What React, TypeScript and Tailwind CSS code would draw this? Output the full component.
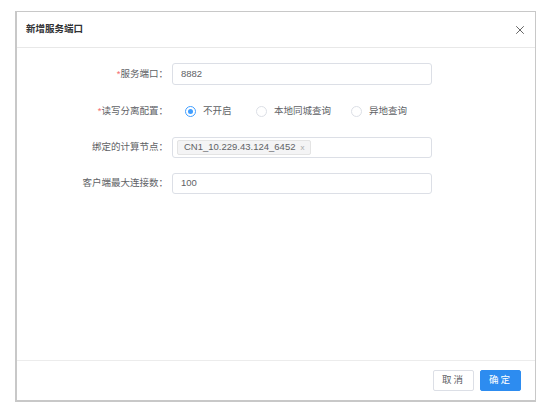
import { X } from 'lucide-react';

const font = { fontFamily: '"Liberation Sans", "Noto Sans CJK SC", sans-serif' };

function Label({ text, required }: { text: string; required?: boolean }) {
    return (
        <div className="w-[155px] shrink-0 pr-[4px] text-right text-[9.5px] text-[#606266]">
            {required && <span className="text-[#f56c6c]">*</span>}
            {text}：
        </div>
    );
}

function Radio({ label, checked }: { label: string; checked?: boolean }) {
    return (
        <div className="flex items-center gap-[7px]">
            <span
                className={
                    checked
                        ? 'flex h-[11px] w-[11px] items-center justify-center rounded-full border border-[#409eff] bg-white'
                        : 'h-[11px] w-[11px] rounded-full border border-[#dcdfe6] bg-white'
                }
            >
                {checked && <span className="h-[5px] w-[5px] rounded-full bg-[#409eff]" />}
            </span>
            <span className="text-[9.5px] text-[#606266]">{label}</span>
        </div>
    );
}

export default function App() {
    return (
        <div className="h-[420px] w-[550px] bg-white pl-[15px] pt-[11px]" style={font}>
            <div className="flex h-[391px] w-[521px] flex-col border border-[#c8c8c8] border-b-2 border-l-2 bg-white">
                {/* Header */}
                <div className="flex h-[36px] shrink-0 items-center justify-between border-b border-[#e8e8e8] pl-[9px] pr-[8px]">
                    <span className="text-[9.5px] font-bold text-[#303133]">新增服务端口</span>
                    <X size={14} strokeWidth={1.4} className="text-[#444]" />
                </div>

                {/* Body */}
                <div className="flex flex-1 flex-col gap-[15px] pt-[15px]">
                    <div className="flex items-center">
                        <Label text="服务端口" required />
                        <div className="flex h-[22px] w-[260px] items-center rounded-[3px] border border-[#dcdfe6] px-[8px] text-[9.5px] text-[#606266]">
                            8882
                        </div>
                    </div>

                    <div className="flex h-[22px] items-center">
                        <Label text="读写分离配置" required />
                        <div className="flex items-center pl-[13px]">
                            <div className="w-[71px]"><Radio label="不开启" checked /></div>
                            <div className="w-[95px]"><Radio label="本地同城查询" /></div>
                            <Radio label="异地查询" />
                        </div>
                    </div>

                    <div className="flex items-center">
                        <Label text="绑定的计算节点" />
                        <div className="flex h-[21px] w-[260px] items-center rounded-[3px] border border-[#dcdfe6] px-[4px]">
                            <span className="flex h-[15px] items-center gap-[5px] rounded-[2px] border border-[#e4e4e4] bg-[#f4f4f5] px-[6px] text-[9.5px] text-[#606266]">
                                CN1_10.229.43.124_6452
                                <span className="text-[8px] text-[#aaa]">x</span>
                            </span>
                        </div>
                    </div>

                    <div className="flex items-center">
                        <Label text="客户端最大连接数" />
                        <div className="flex h-[21px] w-[260px] items-center rounded-[3px] border border-[#dcdfe6] px-[8px] text-[9.5px] text-[#606266]">
                            100
                        </div>
                    </div>
                </div>

                {/* Footer */}
                <div className="flex h-[40px] shrink-0 items-center justify-end gap-[6px] border-t border-[#ececec] pr-[14px]">
                    <button className="h-[21px] w-[41px] rounded-[2px] border border-[#dcdfe6] bg-white text-[9.5px] tracking-[2px] text-[#606266]">
                        取消
                    </button>
                    <button className="h-[21px] w-[41px] rounded-[2px] border border-[#2d8cf0] bg-[#2d8cf0] text-[9.5px] tracking-[2px] text-white">
                        确定
                    </button>
                </div>
            </div>
        </div>
    );
}
